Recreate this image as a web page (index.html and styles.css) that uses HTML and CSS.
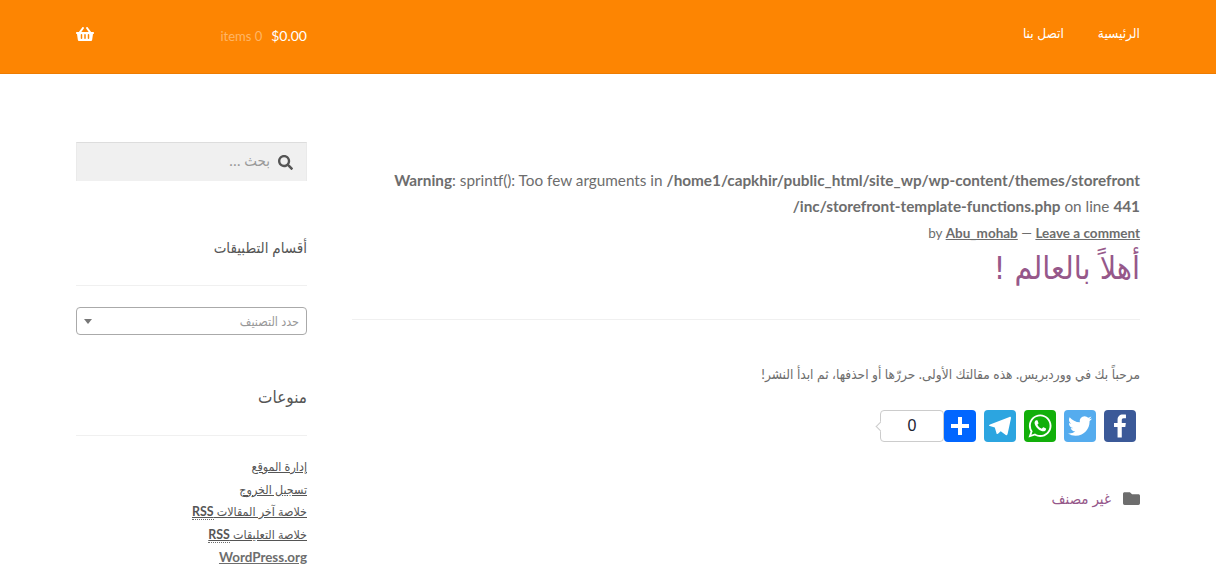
FILE: index.html
```html
<!DOCTYPE html>
<html lang="ar" dir="rtl">
<head>
<meta charset="utf-8">
<title>أهلاً بالعالم !</title>
<link rel="stylesheet" href="styles.css">
</head>
<body>
<header class="site-header">
  <div class="wrap header-row">
    <nav class="nav">
      <a href="#">الرئيسية</a>
      <a href="#">اتصل بنا</a>
    </nav>
    <div class="cart">
      <span class="cart-total" dir="ltr"><span class="cart-count">items 0</span><span class="cart-price">$0.00</span></span>
      <svg class="basket" viewBox="0 0 576 512"><path d="M576 216v16c0 13.255-10.745 24-24 24h-8l-26.113 182.788C514.509 462.435 494.257 480 470.37 480H105.63c-23.887 0-44.139-17.565-47.518-41.212L32 256h-8c-13.255 0-24-10.745-24-24v-16c0-13.255 10.745-24 24-24h67.341l106.78-146.821c10.395-14.292 30.407-17.453 44.701-7.058 14.293 10.395 17.453 30.408 7.058 44.701L170.477 192h235.046L326.12 82.821c-10.395-14.292-7.234-34.306 7.059-44.701 14.291-10.395 34.306-7.235 44.701 7.058L484.659 192H552c13.255 0 24 10.745 24 24zM312 392V280c0-13.255-10.745-24-24-24s-24 10.745-24 24v112c0 13.255 10.745 24 24 24s24-10.745 24-24zm112 0V280c0-13.255-10.745-24-24-24s-24 10.745-24 24v112c0 13.255 10.745 24 24 24s24-10.745 24-24zm-224 0V280c0-13.255-10.745-24-24-24s-24 10.745-24 24v112c0 13.255 10.745 24 24 24s24-10.745 24-24z"/></svg>
    </div>
  </div>
</header>
<div class="wrap page">
  <main class="content">
    <div class="warning" dir="ltr"><b>Warning</b>: sprintf(): Too few arguments in <b>/home1/capkhir/public_html/site_wp/wp-content/themes/storefront<br>/inc/storefront-template-functions.php</b> on line <b>441</b></div>
    <div class="meta" dir="ltr">by <a href="#">Abu_mohab</a> — <a href="#">Leave a comment</a></div>
    <h1 class="title">أهلاً بالعالم !</h1>
    <hr class="rule">
    <p class="lead">مرحباً بك في ووردبريس. هذه مقالتك الأولى. حررّها أو احذفها، ثم ابدأ النشر!</p>
    <div class="share">
      <span class="a2a fb"><svg viewBox="0 0 32 32"><path d="M17.78 27.5V17.008h3.522l.527-4.09h-4.05v-2.61c0-1.182.33-1.99 2.023-1.99h2.166V4.66c-.375-.05-1.66-.16-3.155-.16-3.123 0-5.26 1.905-5.26 5.405v3.016h-3.53v4.09h3.53V27.5h4.223z"/></svg></span>
      <span class="a2a tw"><svg viewBox="0 0 32 32"><path d="M28 8.557a9.913 9.913 0 0 1-2.828.775 4.93 4.93 0 0 0 2.166-2.725 9.738 9.738 0 0 1-3.13 1.194 4.92 4.92 0 0 0-3.593-1.55 4.924 4.924 0 0 0-4.794 6.049c-4.09-.21-7.72-2.17-10.15-5.15a4.942 4.942 0 0 0-.665 2.477c0 1.71.87 3.214 2.19 4.1a4.968 4.968 0 0 1-2.23-.616v.06c0 2.39 1.7 4.38 3.952 4.83-.414.115-.85.174-1.297.174-.318 0-.626-.03-.928-.086a4.935 4.935 0 0 0 4.6 3.42 9.893 9.893 0 0 1-6.114 2.107c-.398 0-.79-.023-1.175-.068a13.953 13.953 0 0 0 7.55 2.213c9.056 0 14.01-7.507 14.01-14.013 0-.213-.005-.426-.015-.637.96-.695 1.795-1.56 2.455-2.55z"/></svg></span>
      <span class="a2a wa"><svg viewBox="0 0 32 32"><path fill-rule="evenodd" d="M16.21 4.41C9.973 4.41 4.917 9.465 4.917 15.7c0 2.134.592 4.13 1.62 5.832L4.5 27.59l6.25-2.002a11.241 11.241 0 0 0 5.46 1.404c6.234 0 11.29-5.055 11.29-11.29 0-6.237-5.056-11.292-11.29-11.292zm0 20.69c-1.91 0-3.69-.57-5.173-1.553l-3.61 1.156 1.173-3.49a9.345 9.345 0 0 1-1.79-5.512c0-5.18 4.217-9.4 9.4-9.4 5.183 0 9.397 4.22 9.397 9.4 0 5.188-4.214 9.4-9.398 9.4zm5.293-6.832c-.284-.155-1.673-.906-1.934-1.012-.265-.106-.455-.16-.658.12s-.78.91-.954 1.096c-.176.186-.345.203-.628.048-.282-.154-1.2-.494-2.264-1.517-.83-.795-1.373-1.76-1.53-2.055-.158-.295 0-.445.15-.584.134-.124.3-.326.45-.488.15-.163.203-.28.306-.47.104-.19.06-.36-.005-.506-.066-.147-.59-1.587-.81-2.173-.218-.586-.46-.498-.63-.505-.168-.007-.358-.038-.55-.045-.19-.007-.51.054-.78.332-.277.274-1.05.943-1.1 2.362-.055 1.418.926 2.826 1.064 3.023.137.2 1.874 3.272 4.76 4.537 2.888 1.264 2.9.878 3.43.85.53-.027 1.734-.633 2-1.297.266-.664.287-1.24.22-1.363-.07-.123-.26-.203-.54-.357z"/></svg></span>
      <span class="a2a tg"><svg viewBox="0 0 32 32"><path d="M25.515 6.896L6.027 14.41c-1.33.534-1.322 1.276-.243 1.606l5 1.56 1.72 5.66c.226.625.115.873.77.873.506 0 .73-.235 1.012-.51l2.43-2.363 5.056 3.734c.93.514 1.602.25 1.834-.863l3.32-15.638c.338-1.363-.52-1.98-1.41-1.577z"/></svg></span>
      <span class="a2a plus"><svg viewBox="0 0 32 32"><path d="M14 7h4v18h-4z"/><path d="M7 14h18v4H7z"/></svg></span>
      <span class="count">0</span>
    </div>
    <div class="cat">
      <svg class="folder" viewBox="0 0 512 512"><path d="M464 128H272l-64-64H48C21.49 64 0 85.49 0 112v288c0 26.51 21.49 48 48 48h416c26.51 0 48-21.49 48-48V176c0-26.51-21.49-48-48-48z"/></svg>
      <a href="#">غير مصنف</a>
    </div>
  </main>
  <aside class="sidebar">
    <div class="search">
      <svg class="search-icon" viewBox="0 0 512 512"><path d="M505 442.7L405.3 343c-4.5-4.5-10.6-7-17-7H372c27.6-35.3 44-79.7 44-128C416 93.1 322.9 0 208 0S0 93.1 0 208s93.1 208 208 208c48.3 0 92.7-16.4 128-44v16.3c0 6.4 2.5 12.5 7 17l99.7 99.7c9.4 9.4 24.6 9.4 33.9 0l28.3-28.3c9.4-9.4 9.4-24.6.1-34zM208 336c-70.7 0-128-57.2-128-128 0-70.7 57.2-128 128-128 70.7 0 128 57.2 128 128 0 70.7-57.2 128-128 128z"/></svg>
      <span class="placeholder">بحث …</span>
    </div>
    <h2 class="widget-title first">أقسام التطبيقات</h2>
    <div class="select"><span>حدد التصنيف</span><i class="caret"></i></div>
    <h2 class="widget-title second">منوعات</h2>
    <ul class="links">
      <li><a href="#">إدارة الموقع</a></li>
      <li><a href="#">تسجيل الخروج</a></li>
      <li><a href="#">خلاصة آخر المقالات <abbr>RSS</abbr></a></li>
      <li><a href="#">خلاصة التعليقات <abbr>RSS</abbr></a></li>
      <li><a class="latin" href="#">WordPress.org</a></li>
    </ul>
  </aside>
</div>
</body>
</html>
```
FILE: styles.css
```css
* { box-sizing: border-box; }
html, body { margin: 0; padding: 0; overflow: hidden; }
body {
  font-family: "Lato", "DejaVu Sans Condensed", "DejaVu Sans", sans-serif;
  font-size: 16px;
  color: #6d6d6d;
  background: #fff;
}
a { color: inherit; }
.wrap { width: 1064px; margin: 0 76px; }
.site-header {
  height: 74px;
  background: #fd8502;
  border-bottom: 1px solid #ee7c00;
}
.header-row {
  height: 73px;
  display: flex;
  justify-content: space-between;
  align-items: center;
}
.nav { display: flex; gap: 34px; margin-top: -8px; font-size: 13.6px; }
.nav a { color: #fff; text-decoration: none; }
.cart {
  width: 231px;
  margin-top: -5px;
  display: flex;
  justify-content: space-between;
  align-items: center;
  color: #fff;
}
.basket { width: 18px; height: 16px; fill: #fff; }
.cart-total { display: flex; gap: 9px; align-items: baseline; padding-top: 2px; }
.cart-count { font-size: 13px; color: #ffb666; }
.cart-price { font-size: 14px; }
.page { display: flex; justify-content: space-between; align-items: flex-start; }
.content { width: 788px; padding-top: 93px; }
.warning { text-align: right; font-size: 15.3px; line-height: 26px; }
.meta { margin-top: 1px; text-align: right; font-size: 13.5px; line-height: 26px; }
.meta a { font-weight: 700; }
.title {
  margin: 0;
  font-size: 32px;
  line-height: 44px;
  font-weight: 400;
  color: #96588a;
  font-family: "DejaVu Sans Condensed", "DejaVu Sans", sans-serif;
}
.rule { margin: 29px 0 0; border: 0; border-top: 1px solid #f0f0f0; }
.lead { margin: 43px 0 0; font-size: 13.6px; line-height: 22px; }
.share { display: flex; margin-top: 25px; padding-right: 4px; gap: 8px; }
.a2a { width: 32px; height: 32px; border-radius: 4px; display: block; }
.a2a svg { width: 32px; height: 32px; fill: #fff; display: block; }
.fb { background: #3b5998; }
.tw { background: #55acee; }
.wa { background: #12af0a; }
.tg { background: #2ca5e0; }
.plus { background: #0166ff; }
.count {
  position: relative;
  width: 64px;
  height: 32px;
  margin-right: -8px;
  border: 1px solid #ccc;
  border-radius: 4px;
  text-align: center;
  line-height: 30px;
  color: #1c2333;
  font-family: "Liberation Sans", sans-serif;
  font-size: 16px;
  background: #fff;
}
.count::before {
  content: "";
  position: absolute;
  left: -4px;
  top: 12px;
  width: 6px;
  height: 6px;
  background: #fff;
  border-left: 1px solid #ccc;
  border-bottom: 1px solid #ccc;
  transform: rotate(45deg);
}
.cat { display: flex; align-items: center; gap: 12px; margin-top: 45px; font-size: 15px; line-height: 22px; }
.cat a { color: #96588a; text-decoration: none; }
.folder { width: 17px; height: 17px; fill: #6d6d6d; }
.sidebar { width: 231px; padding-top: 68px; }
.search {
  height: 39px;
  background: #f0f0f0;
  border-top: 1px solid #ddd;
  border-left: 1px solid #eaeaea;
  border-right: 1px solid #eaeaea;
  display: flex;
  align-items: center;
  gap: 8px;
  padding: 0 13px;
  color: #9a9a9a;
  font-size: 15px;
}
.placeholder { padding-bottom: 3px; }
.search-icon { width: 15px; height: 15px; fill: #555; }
.widget-title {
  margin: 0;
  padding-bottom: 26px;
  border-bottom: 1px solid #f0f0f0;
  font-size: 15px;
  font-weight: 400;
  line-height: 24px;
  color: #555;
}
.first { margin-top: 54px; }
.second { margin-top: 50px; font-size: 17px; }
.select {
  margin-top: 21px;
  height: 28px;
  border: 1px solid #aaa;
  border-radius: 4px;
  display: flex;
  justify-content: space-between;
  align-items: center;
  padding: 0 7px;
  font-size: 12.5px;
  color: #999;
}
.caret {
  width: 0;
  height: 0;
  border-left: 4px solid transparent;
  border-right: 4px solid transparent;
  border-top: 5px solid #777;
}
.links { list-style: none; margin: 20px 0 0; padding: 0; font-size: 12.4px; font-weight: 400; line-height: 22.5px; color: #555; }
.latin { font-size: 13.4px; font-weight: 700; color: #6d6d6d; }
abbr { border-bottom: 1px dotted #6d6d6d; font-weight: 700; }
```
